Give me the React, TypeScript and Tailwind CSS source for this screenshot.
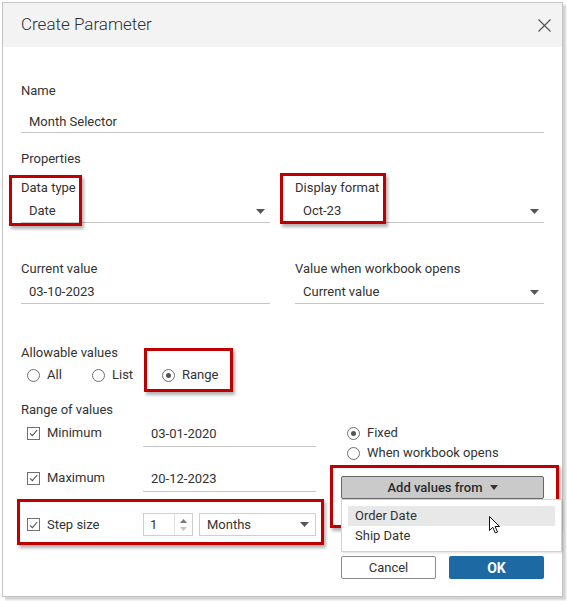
import React from 'react';

function Caret({ className = '' }: { className?: string }) {
  return (
    <svg width="9" height="5" viewBox="0 0 9 5" className={className}>
      <path d="M0 0 H9 L4.5 5 Z" fill="#555" />
    </svg>
  );
}

function Checkbox() {
  return (
    <span className="flex h-[13px] w-[13px] shrink-0 items-center justify-center border border-[#707070] bg-white">
      <svg width="9" height="8" viewBox="0 0 9 8">
        <path d="M1 4.3 L3.4 6.7 L8.2 1" fill="none" stroke="#555" strokeWidth="1.1" />
      </svg>
    </span>
  );
}

function Radio({ checked = false }: { checked?: boolean }) {
  return (
    <span className="flex h-[13px] w-[13px] shrink-0 items-center justify-center rounded-full border border-[#707070] bg-white">
      {checked && <span className="h-[5px] w-[5px] rounded-full bg-[#555]" />}
    </span>
  );
}

function Underlined({ value, select = false, className = '' }: { value: string; select?: boolean; className?: string }) {
  return (
    <div className={`border-b border-[#c6c6c6] pl-2 pr-[5px] ${className}`}>
      <div className="flex h-4 items-center justify-between">
        <span>{value}</span>
        {select && <Caret />}
      </div>
    </div>
  );
}

function Callout({ className }: { className: string }) {
  return (
    <div
      className={`pointer-events-none absolute border-[3px] border-[#c00000] shadow-[2px_3px_3px_rgba(0,0,0,0.3)] ${className}`}
    />
  );
}

export default function App() {
  return (
    <div className="relative h-[601px] w-[567px] overflow-hidden bg-white font-[Roboto,'Liberation_Sans',sans-serif] text-[#333]">
      <div className="ml-[2px] mt-[2px] w-[561px] border border-[#c4c4c4] bg-white shadow-[3px_3px_2px_rgba(0,0,0,0.18)]">
        {/* header */}
        <div className="flex h-[44px] items-center justify-between bg-[#f3f3f3] pl-[18px] pr-[11px]">
          <span className="text-[17px] font-light text-[#2e2e2e]">Create Parameter</span>
          <svg width="13" height="13" viewBox="0 0 13 13">
            <path d="M0.5 0.5 L12.5 12.5 M12.5 0.5 L0.5 12.5" stroke="#555" strokeWidth="1.2" />
          </svg>
        </div>

        <div className="px-[18px] pb-[17px] text-[13px] leading-4">
          <div className="mt-[36px]">Name</div>
          <Underlined value="Month Selector" className="pt-[15px] pb-[2px]" />

          <div className="mt-[18px]">Properties</div>
          <div className="mt-[13px] grid grid-cols-2 gap-x-[25px]">
            <div>
              <div>Data type</div>
              <Underlined value="Date" select className="pt-[7px] pb-[3px]" />
            </div>
            <div>
              <div>Display format</div>
              <Underlined value="Oct-23" select className="pt-[7px] pb-[3px]" />
            </div>
          </div>

          <div className="mt-[38px] grid grid-cols-2 gap-x-[25px]">
            <div>
              <div>Current value</div>
              <Underlined value="03-10-2023" className="pt-[7px] pb-[3px]" />
            </div>
            <div>
              <div>Value when workbook opens</div>
              <Underlined value="Current value" select className="pt-[7px] pb-[3px]" />
            </div>
          </div>

          <div className="mt-[41px]">Allowable values</div>
          <div className="mt-[6px] flex h-4 items-center pl-[6px]">
            <label className="flex w-[65px] items-center gap-[7px]">
              <Radio /> All
            </label>
            <label className="flex w-[70px] items-center gap-[7px]">
              <Radio /> List
            </label>
            <label className="flex items-center gap-[7px]">
              <Radio checked /> Range
            </label>
          </div>

          <div className="mt-[19px]">Range of values</div>
          <div className="flex gap-[25px]">
            {/* left column */}
            <div className="w-[295px]">
              <div className="flex items-start">
                <div className="mt-[7px] flex h-4 w-[122px] items-center gap-[7px] pl-[6px]">
                  <Checkbox /> Minimum
                </div>
                <Underlined value="03-01-2020" className="w-[173px] pt-[8px] pb-[4px]" />
              </div>
              <div className="mt-[16px] flex items-start">
                <div className="mt-[7px] flex h-4 w-[122px] items-center gap-[7px] pl-[6px]">
                  <Checkbox /> Maximum
                </div>
                <Underlined value="20-12-2023" className="w-[173px] pt-[8px] pb-[4px]" />
              </div>
              <div className="mt-[21px] flex h-[23px] items-center">
                <div className="flex w-[122px] items-center gap-[7px] pl-[6px]">
                  <Checkbox /> Step size
                </div>
                <div className="flex h-[23px] w-[50px] border border-[#cfcfcf]">
                  <span className="flex flex-1 items-center pl-[6px]">1</span>
                  <div className="flex w-[18px] flex-col items-center justify-center gap-[4px] border-l border-[#e2e2e2]">
                    <svg width="7" height="4" viewBox="0 0 7 4">
                      <path d="M0 4 L3.5 0 L7 4 Z" fill="#777" />
                    </svg>
                    <svg width="7" height="4" viewBox="0 0 7 4">
                      <path d="M0 0 H7 L3.5 4 Z" fill="#c4c4c4" />
                    </svg>
                  </div>
                </div>
                <div className="ml-[6px] flex h-[23px] w-[117px] items-center justify-between border border-[#cfcfcf] pl-[7px] pr-[6px]">
                  <span>Months</span>
                  <Caret />
                </div>
              </div>
            </div>

            {/* right column */}
            <div className="w-[203px]">
              <label className="mt-[7px] flex h-4 items-center gap-[7px] pl-[6px]">
                <Radio checked /> Fixed
              </label>
              <label className="mt-[4px] flex h-4 items-center gap-[7px] pl-[6px]">
                <Radio /> When workbook opens
              </label>
              <div className="relative mt-[15px]">
                <button className="flex h-[23px] w-full items-center justify-center gap-[7px] rounded-[2px] border border-[#666] bg-[#cacaca] font-medium text-[#2b2b2b]">
                  Add values from
                  <svg width="8" height="5" viewBox="0 0 8 5">
                    <path d="M0 0 H8 L4 5 Z" fill="#333" />
                  </svg>
                </button>
                <div className="absolute left-0 top-[23px] z-10 h-[53px] w-[221px] border border-[#d2d2d2] bg-white px-[6px] pt-[6px] shadow-[1px_1px_2px_rgba(0,0,0,0.12)]">
                  <div className="flex h-[20px] items-center bg-[#e8e8e8] pl-[7px]">Order Date</div>
                  <div className="flex h-[20px] items-center pl-[7px]">Ship Date</div>
                </div>
              </div>
              <div className="mt-[57px] flex justify-between">
                <button className="h-[23px] w-[95px] rounded-[2px] border border-[#8a8a8a] bg-white text-[#333]">
                  Cancel
                </button>
                <button className="h-[23px] w-[95px] rounded-[2px] bg-[#1c69a3] text-[14px] font-bold text-white">
                  OK
                </button>
              </div>
            </div>
          </div>
        </div>
      </div>

      {/* annotation boxes */}
      <Callout className="left-[9px] top-[175px] h-[51px] w-[73px]" />
      <Callout className="left-[280px] top-[173px] h-[51px] w-[106px]" />
      <Callout className="left-[144px] top-[348px] h-[44px] w-[89px]" />
      <Callout className="left-[17px] top-[499px] h-[46px] w-[307px]" />
      <Callout className="left-[330px] top-[465px] h-[63px] w-[229px]" />

      {/* mouse pointer */}
      <svg className="absolute left-[489px] top-[516px] z-20" width="12" height="19" viewBox="0 0 12 19">
        <path
          d="M0.5 0.5 L0.5 14.5 L3.8 11.3 L6.3 17 L8.5 16 L6.1 10.5 L10.6 10.5 Z"
          fill="white"
          stroke="#111"
          strokeWidth="1"
          strokeLinejoin="round"
        />
      </svg>
    </div>
  );
}
